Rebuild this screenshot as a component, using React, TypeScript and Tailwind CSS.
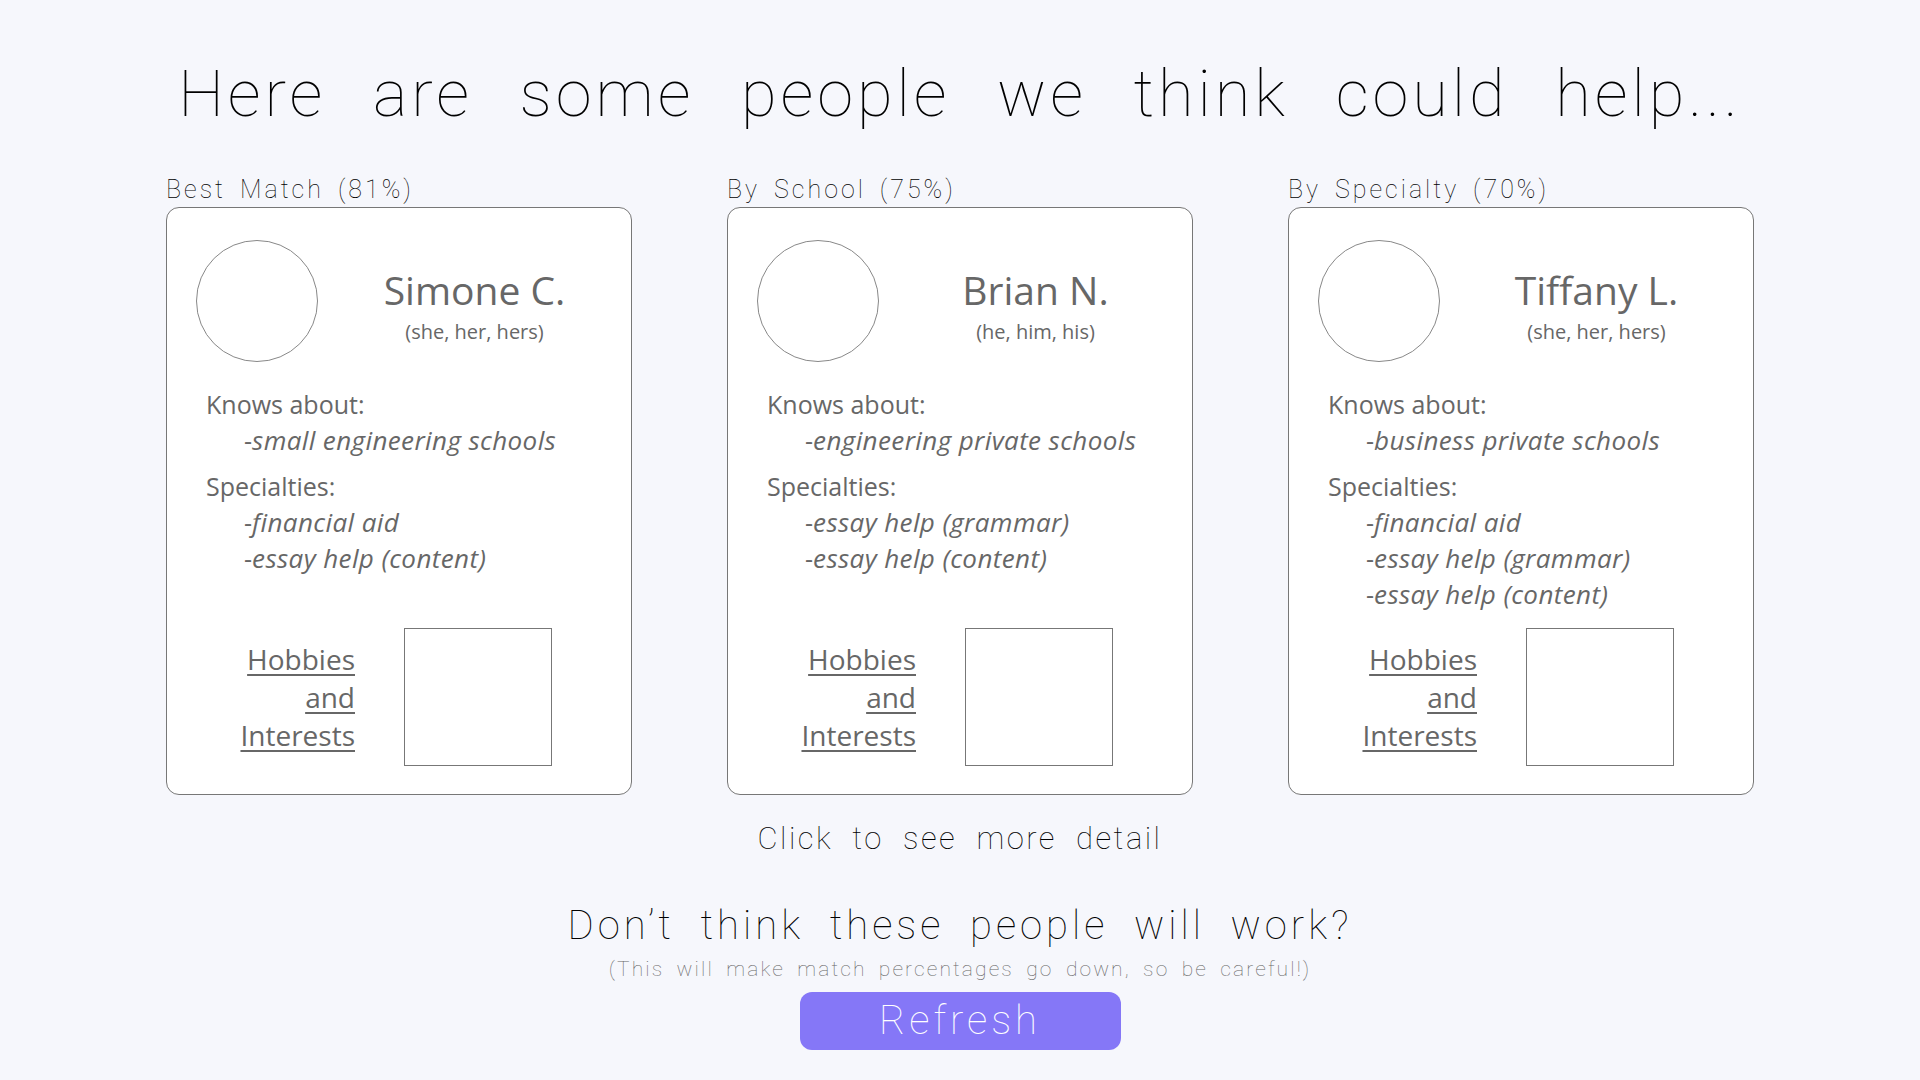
import React from 'react';

type Person = {
  label: string;
  name: string;
  pronouns: string;
  knows: string[];
  specialties: string[];
};

const people: Person[] = [
  {
    label: 'Best Match (81%)',
    name: 'Simone C.',
    pronouns: '(she, her, hers)',
    knows: ['small engineering schools'],
    specialties: ['financial aid', 'essay help (content)'],
  },
  {
    label: 'By School (75%)',
    name: 'Brian N.',
    pronouns: '(he, him, his)',
    knows: ['engineering private schools'],
    specialties: ['essay help (grammar)', 'essay help (content)'],
  },
  {
    label: 'By Specialty (70%)',
    name: 'Tiffany L.',
    pronouns: '(she, her, hers)',
    knows: ['business private schools'],
    specialties: ['financial aid', 'essay help (grammar)', 'essay help (content)'],
  },
];

const thin = { fontFamily: 'Roboto, "Noto Sans", sans-serif' };
const body = { fontFamily: '"Open Sans", "Noto Sans", sans-serif' };

const PersonCard: React.FC<{ person: Person }> = ({ person }) => {
  return (
    <div className="flex flex-col">
      <div className="text-[25px] leading-[30px] font-thin tracking-[0.12em] [word-spacing:0.2em] text-black" style={thin}>
        {person.label}
      </div>
      <div className="mt-[2px] h-[588px] bg-white border border-[#777] rounded-[13px] flex flex-col text-[#676767]" style={body}>
        <div className="flex pt-[32px] pl-[29px]">
          <div className="w-[122px] h-[122px] rounded-full border border-[#888] shrink-0"></div>
          <div className="flex-1 flex flex-col items-center pt-[26px]">
            <div className="text-[39px] leading-[48px]">{person.name}</div>
            <div className="text-[20px] leading-[26px] mt-[5px]">{person.pronouns}</div>
          </div>
        </div>
        <div className="pl-[39px] mt-[24px] text-[25px] leading-[36px]">
          <div>Knows about:</div>
          {person.knows.map((k) => (
            <div key={k} className="pl-[38px]">
              -<span className="italic text-[26px] tracking-[0.015em]">{k}</span>
            </div>
          ))}
          <div className="mt-[10px]">Specialties:</div>
          {person.specialties.map((s) => (
            <div key={s} className="pl-[38px]">
              -<span className="italic text-[26px] tracking-[0.015em]">{s}</span>
            </div>
          ))}
        </div>
        <div className="mt-auto mb-[28px] flex items-center pl-[70px]">
          <a href="#" className="w-[118px] text-right text-[28px] leading-[38px] underline underline-offset-[4px] decoration-[1.5px] text-[#676767]">
            Hobbies
            <br />
            and
            <br />
            Interests
          </a>
          <div className="ml-[49px] w-[148px] h-[138px] border border-[#777]"></div>
        </div>
      </div>
    </div>
  );
};

export default function App() {
  return (
    <div className="min-h-screen w-full bg-[#f6f7fc] flex flex-col items-center">
      <h1 className="mt-[54px] text-[65px] leading-[80px] font-thin tracking-[0.06em] [word-spacing:0.42em] text-black" style={thin}>
        Here are some people we think could help...
      </h1>
      <div className="mt-[41px] w-[1588px] grid grid-cols-3 gap-[95px]">
        {people.map((p) => (
          <PersonCard key={p.name} person={p} />
        ))}
      </div>
      <div className="mt-[24px] text-[31px] leading-[40px] font-thin tracking-[0.08em] [word-spacing:0.3em] text-black" style={thin}>
        Click to see more detail
      </div>
      <div className="mt-[42px] text-[40px] leading-[50px] font-thin tracking-[0.1em] [word-spacing:0.3em] text-black" style={thin}>
        Don’t think these people will work?
      </div>
      <div className="mt-[4px] text-[21px] leading-[28px] font-thin tracking-[0.1em] [word-spacing:0.25em] text-[#666]" style={thin}>
        (This will make match percentages go down, so be careful!)
      </div>
      <button className="mt-[9px] w-[321px] h-[58px] rounded-[12px] bg-[#8577f7] text-white text-[40px] leading-[58px] font-thin tracking-[0.1em]" style={thin}>
        Refresh
      </button>
    </div>
  );
}
